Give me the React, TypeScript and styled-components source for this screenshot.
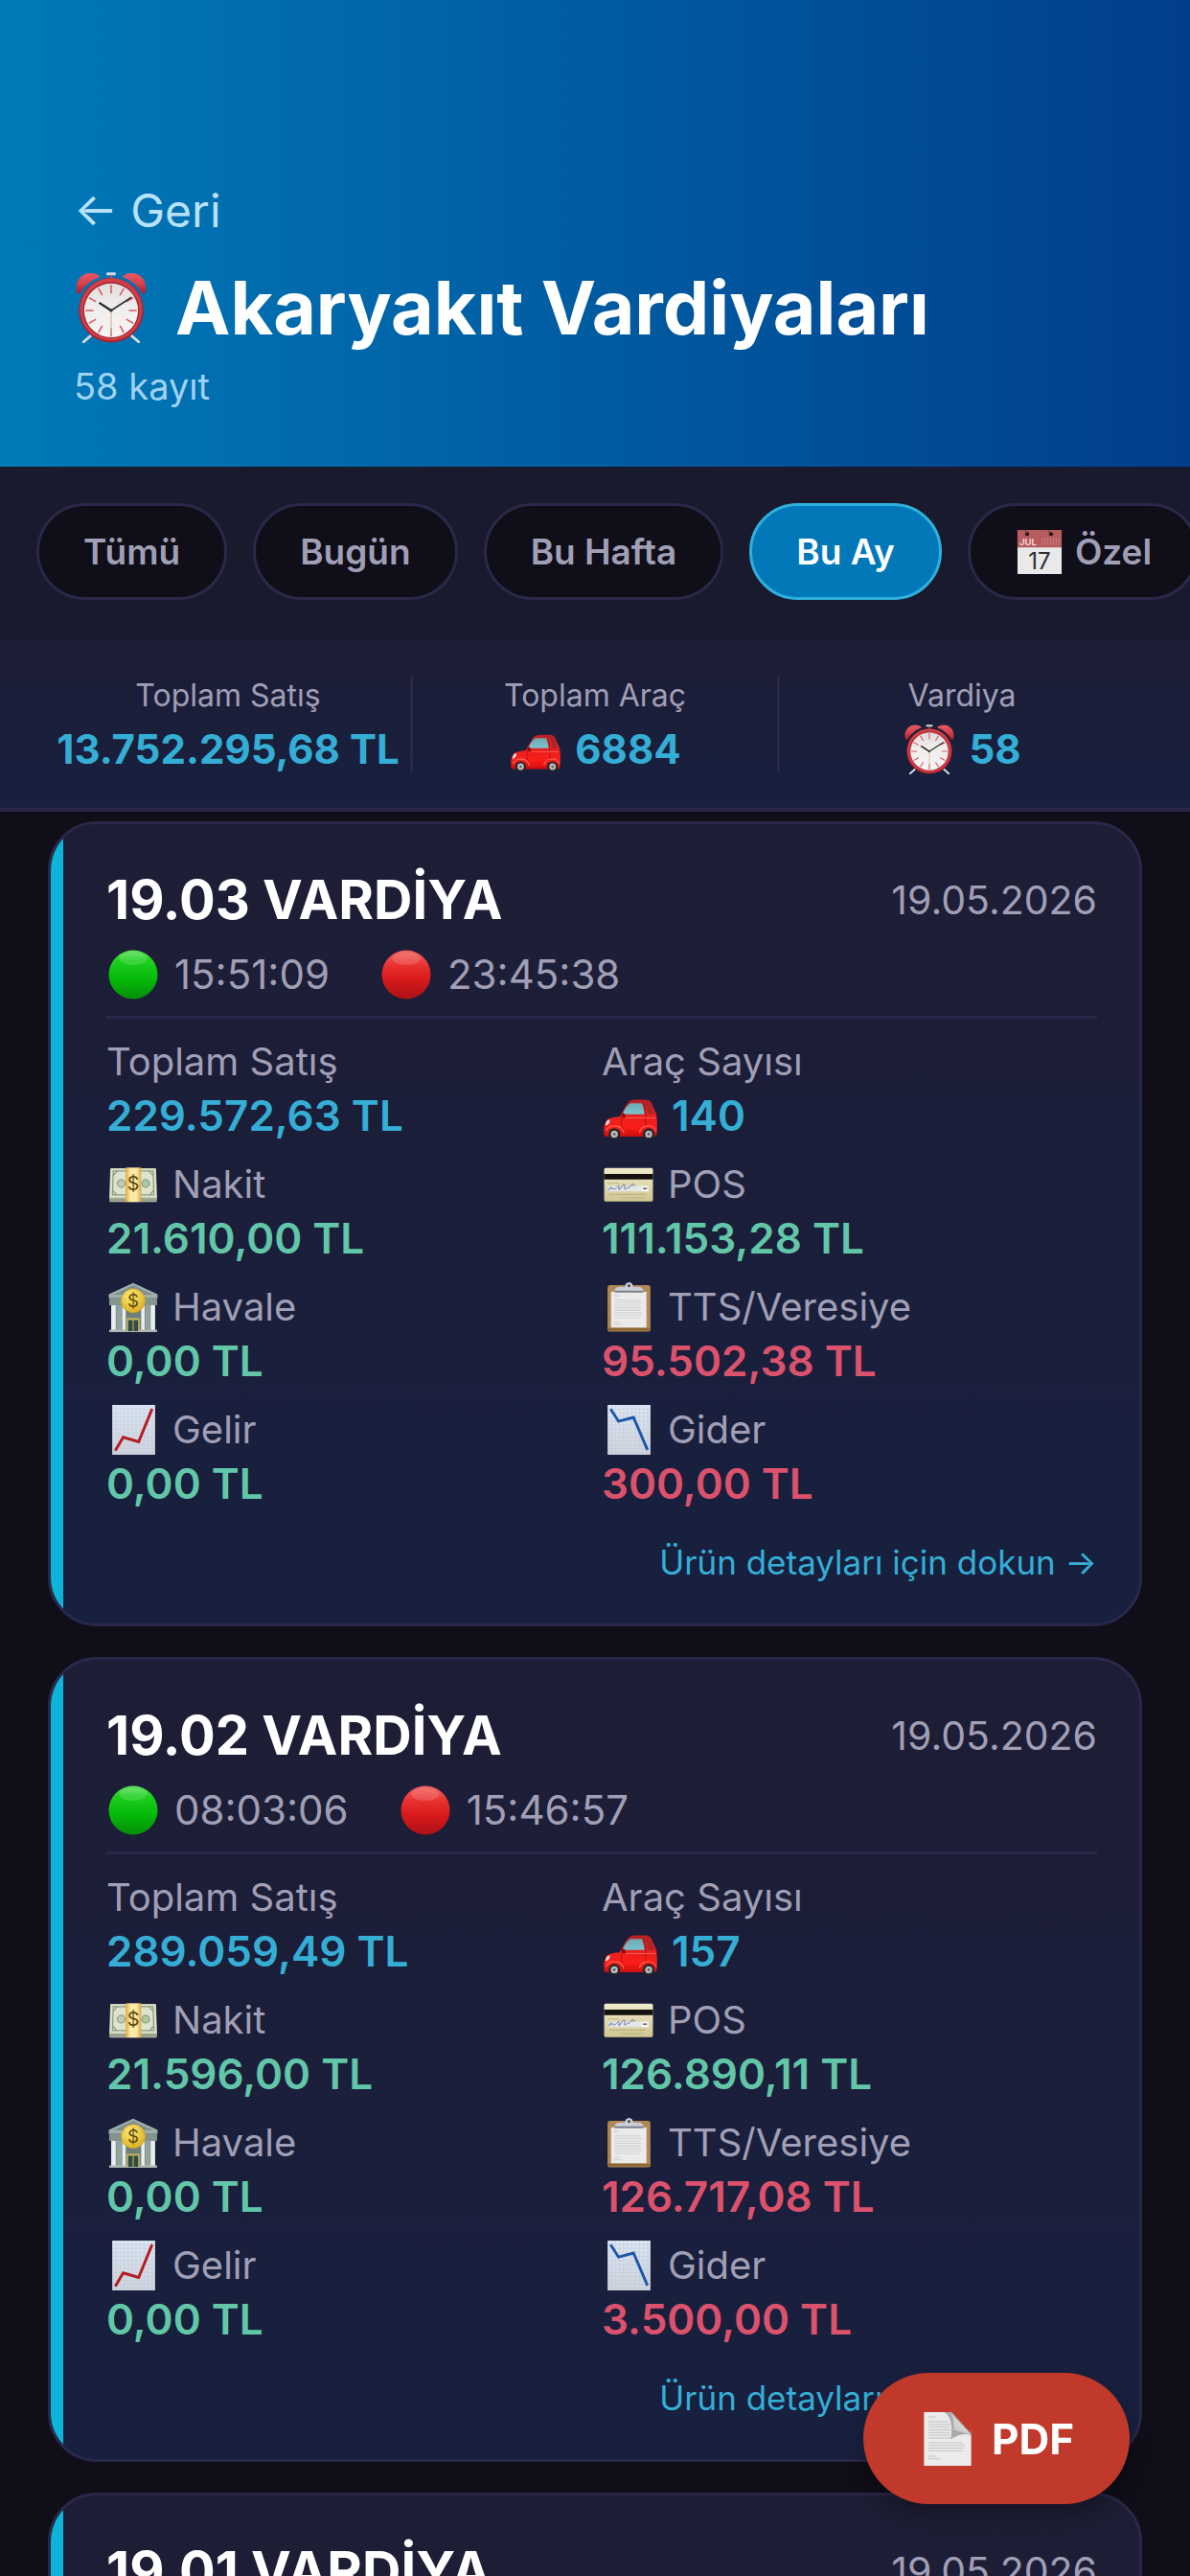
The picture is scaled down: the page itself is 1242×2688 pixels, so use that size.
import { useState } from 'react';
import type { ReactNode } from 'react';
import { createGlobalStyle, styled } from 'styled-components';

type Tone = 'blue' | 'green' | 'red';

interface Shift {
  id: string;
  name: string;
  date: string;
  start: string;
  end: string;
  total: string;
  vehicles: number;
  cash: string;
  pos: string;
  transfer: string;
  credit: string;
  income: string;
  expense: string;
}

const colors = {
  page: '#0f0e19',
  bar: '#1a1a2e',
  border: '#2a2848',
  muted: '#a09fb5',
  accent: '#0cb4da',
  blue: '#35aed6',
  green: '#62c6a8',
  red: '#dc526c',
};

const FILTERS = ['Tümü', 'Bugün', 'Bu Hafta', 'Bu Ay', 'Özel'];

const SHIFTS: Shift[] = [
  {
    id: '1903',
    name: '19.03 VARDİYA',
    date: '19.05.2026',
    start: '15:51:09',
    end: '23:45:38',
    total: '229.572,63 TL',
    vehicles: 140,
    cash: '21.610,00 TL',
    pos: '111.153,28 TL',
    transfer: '0,00 TL',
    credit: '95.502,38 TL',
    income: '0,00 TL',
    expense: '300,00 TL',
  },
  {
    id: '1902',
    name: '19.02 VARDİYA',
    date: '19.05.2026',
    start: '08:03:06',
    end: '15:46:57',
    total: '289.059,49 TL',
    vehicles: 157,
    cash: '21.596,00 TL',
    pos: '126.890,11 TL',
    transfer: '0,00 TL',
    credit: '126.717,08 TL',
    income: '0,00 TL',
    expense: '3.500,00 TL',
  },
  {
    id: '1901',
    name: '19.01 VARDİYA',
    date: '19.05.2026',
    start: '00:02:14',
    end: '07:58:40',
    total: '198.340,20 TL',
    vehicles: 118,
    cash: '18.450,00 TL',
    pos: '97.215,60 TL',
    transfer: '0,00 TL',
    credit: '82.674,60 TL',
    income: '0,00 TL',
    expense: '0,00 TL',
  },
];

// Gradients shared by all the icons
const IconDefs = () => (
  <SDefs aria-hidden="true">
    <defs>
      <linearGradient id="gGreen" x1="0" y1="0" x2="0" y2="1">
        <stop offset="0" stopColor="#5fe05c" />
        <stop offset="0.2" stopColor="#1fd01f" />
        <stop offset="0.6" stopColor="#04b908" />
        <stop offset="1" stopColor="#068d0a" />
      </linearGradient>
      <linearGradient id="gRed" x1="0" y1="0" x2="0" y2="1">
        <stop offset="0" stopColor="#f0625e" />
        <stop offset="0.3" stopColor="#ea3230" />
        <stop offset="0.6" stopColor="#d8191b" />
        <stop offset="1" stopColor="#ab1216" />
      </linearGradient>
      <linearGradient id="gBell" x1="0" y1="0" x2="0" y2="1">
        <stop offset="0" stopColor="#e85a64" />
        <stop offset="0.5" stopColor="#d9404c" />
        <stop offset="1" stopColor="#a81f2b" />
      </linearGradient>
      <linearGradient id="gFace" x1="0" y1="0" x2="0" y2="1">
        <stop offset="0" stopColor="#e0dcdc" />
        <stop offset="0.4" stopColor="#efedec" />
        <stop offset="1" stopColor="#f7f5f4" />
      </linearGradient>
      <linearGradient id="gCar" x1="0" y1="0" x2="0" y2="1">
        <stop offset="0" stopColor="#b52226" />
        <stop offset="0.45" stopColor="#e8201f" />
        <stop offset="0.75" stopColor="#fb1d18" />
        <stop offset="1" stopColor="#c90c0e" />
      </linearGradient>
      <linearGradient id="gGlass" x1="0" y1="0" x2="0" y2="1">
        <stop offset="0" stopColor="#6ba9b2" />
        <stop offset="1" stopColor="#7cc3cf" />
      </linearGradient>
      <linearGradient id="gPaper" x1="0" y1="0" x2="0" y2="1">
        <stop offset="0" stopColor="#dce6f2" />
        <stop offset="1" stopColor="#cfd3dc" />
      </linearGradient>
      <linearGradient id="gCard" x1="0" y1="0" x2="0" y2="1">
        <stop offset="0" stopColor="#f0ebca" />
        <stop offset="1" stopColor="#cfc592" />
      </linearGradient>
      <linearGradient id="gBand" x1="0" y1="0" x2="1" y2="0">
        <stop offset="0" stopColor="#dba93b" />
        <stop offset="0.3" stopColor="#fbe9a5" />
        <stop offset="0.7" stopColor="#fbe9a5" />
        <stop offset="1" stopColor="#dba93b" />
      </linearGradient>
      <radialGradient id="gCoin" cx="0.4" cy="0.3" r="0.8">
        <stop offset="0" stopColor="#fdea72" />
        <stop offset="1" stopColor="#d9a91c" />
      </radialGradient>
      <linearGradient id="gFold" x1="1" y1="0" x2="0" y2="1">
        <stop offset="0" stopColor="#ffffff" />
        <stop offset="0.4" stopColor="#d9d9d9" />
        <stop offset="1" stopColor="#6f6f6f" />
      </linearGradient>
    </defs>
  </SDefs>
);

const ClockIcon = () => (
  <svg viewBox="0 0 50 50">
    <g stroke="#d3dde6" strokeWidth="1.900" strokeLinecap="round">
      <path d="M10.400 45 5.600 49.200M39.600 45l4.800 4.200" />
      <path d="M22.500 1.200h5" />
    </g>
    <path d="M25 2v4.500" stroke="#c8505a" strokeWidth="1.300" />
    <path d="M1 14.500C-1 8 3 .6 10.500.6c3 0 5.500 1 6.800 2.600C11 5.500 6 9.500 3 15.200c-.8.400-1.700.100-2-.700z" fill="url(#gBell)" />
    <path d="M49 14.500C51 8 47 .6 39.500.6c-3 0-5.500 1-6.800 2.600C39 5.500 44 9.500 47 15.200c.8.400 1.700.100 2-.700z" fill="url(#gBell)" />
    <circle cx="25" cy="26.800" r="22.800" fill="#a91f2b" />
    <circle cx="25" cy="26.300" r="22" fill="#cf3f49" />
    <circle cx="25" cy="26.800" r="19.800" fill="#a3222d" />
    <circle cx="25" cy="27" r="19" fill="url(#gFace)" />
    <g stroke="#d5545d" strokeWidth="1">
      <path d="M25 9v6M25 39.500v6M7 27h5.500M37.500 27H43" />
      <path d="m16 11.400 2.800 4.900M34 11.400l-2.800 4.900M16 42.600l2.800-4.900M34 42.600l-2.800-4.900" />
      <path d="m9.400 18 4.900 2.800M40.600 18l-4.900 2.800M9.400 36l4.900-2.800M40.600 36l-4.900-2.800" />
    </g>
    <path d="M25 27v18" stroke="#cdb293" strokeWidth="0.700" />
    <path d="m16.500 21.500 8.500 5.500" stroke="#222" strokeWidth="1.500" />
    <path d="m25 27 14.300-9.300" stroke="#333" strokeWidth="1.200" />
    <circle cx="25" cy="27" r="1.100" fill="#333" />
  </svg>
);

const CarIcon = () => (
  <svg viewBox="0 -4 50 50">
    <path
      d="M.5 39c-.6-5-.2-10.500 2.600-14 2.500-1.800 7-2.600 11.700-2.900l7-11.800C23.600 7.400 26 6.300 30 6.300h8c4 0 5.600 1 6.800 3.700L49 19.500c.9 2.500 1 14.500.6 18.500-.3 1.700-1.500 2.700-3 2.700H3C1.500 40.700.700 40.200.5 39z"
      fill="url(#gCar)"
    />
    <path d="M17.800 19.800c1.300-4.200 3.800-8 6-9.400.8-.6 1.500-.7 2.500-.7h9.500c1 2.500 2 6.500 2.300 10.100z" fill="url(#gGlass)" />
    <path d="M39.500 9c2 0 3.500.5 4.300 2.500l3 8.300h-5c-.3-4-1-7.800-2.300-10.800z" fill="#a92529" />
    <path d="M36.500 9c2.500 5 3 12 2.700 22" stroke="#a01316" strokeWidth="0.800" fill="none" />
    <path d="M17 22.500c-1 4-1 8 1.500 13" stroke="#b80e10" strokeWidth="0.800" fill="none" />
    <path d="M20 23.300h28.500" stroke="#fb5a50" strokeWidth="0.900" />
    <path d="M1.800 30.500c0-3 1-5 3.700-5.600.7 2-.3 4.800-3.700 5.600z" fill="#f3dcdc" />
    <path d="M17.300 18.700c2 0 3.400 1 3.400 4.300h-3c-1.400-1-1.400-3-.4-4.300z" fill="#8e0d10" />
    <path d="M2.500 35.500c1-6 14-7.500 16.500 2M33.500 37c1-8 13.500-8.500 15.500-1.500" fill="none" stroke="#ff6257" strokeWidth="1.100" />
    <circle cx="10" cy="38.300" r="5.400" fill="#26262a" />
    <circle cx="42" cy="38.300" r="5.400" fill="#26262a" />
    <circle cx="10" cy="38.300" r="3.300" fill="#b9b9be" />
    <circle cx="42" cy="38.300" r="3.300" fill="#b9b9be" />
    <circle cx="10" cy="38.300" r="1.200" fill="#5d5d62" />
    <circle cx="42" cy="38.300" r="1.200" fill="#5d5d62" />
  </svg>
);

const DotIcon = ({ fill }: { fill: string }) => (
  <svg viewBox="0 0 50 50">
    <circle cx="25" cy="25" r="24.500" fill={`url(#${fill})`} />
    <ellipse cx="25" cy="9" rx="14" ry="6.500" fill="#fff" opacity="0.140" />
  </svg>
);

const CalendarIcon = () => (
  <svg viewBox="0 0 50 50">
    <path d="M1 1h48v48H1z" fill="#e9e9ea" />
    <path d="M1 1h48v19H1z" fill="#b75b5e" />
    <circle cx="11.500" cy="5.500" r="2.200" fill="#1c1718" />
    <circle cx="37.500" cy="5.500" r="2.200" fill="#1c1718" />
    <path d="M11.500 5.500 9.500 1M37.500 5.500 34 1" stroke="#4d2f31" strokeWidth="1" />
    <path d="M28 9.500v8M31 9.500v8M34 9.500v8M37 9.500v8M40 9.500v8M43 9.500v8M46 9.500v8" stroke="#cd8c8d" strokeWidth="0.800" />
    <text x="3" y="18" fontSize="10" fill="#f3dede">
      JUL
    </text>
    <text x="25" y="44" fontSize="25" fontWeight="400" textAnchor="middle" fill="#2f2f31">
      17
    </text>
  </svg>
);

const MoneyIcon = () => (
  <svg viewBox="0 0 50 50">
    <path d="M2 9h46l1 30-.5 3.500h-47L1 39z" fill="#b9bda9" />
    <path d="M1.500 39.500h47M1.500 41h47" stroke="#7c806e" strokeWidth="0.700" />
    <path d="M2.500 9h45l1 29h-47z" fill="#dfe2cc" />
    <path d="M5 11.500h40l.8 24H4.200z" fill="none" stroke="#8c9a83" strokeWidth="1.200" />
    <path d="m5 16 4-4.500M45 16l-4-4.500M4.500 31l4 4.500M45.500 31l-4 4.500" stroke="#8c9a83" strokeWidth="1.200" />
    <circle cx="13" cy="24" r="3.800" fill="#c3cdb4" stroke="#7f917a" strokeWidth="1" />
    <circle cx="37.500" cy="24" r="3.800" fill="#a9c9a0" stroke="#7f917a" strokeWidth="1" />
    <path d="M17.500 8h15.500v34.500H17.500z" fill="url(#gBand)" />
    <text x="25.200" y="31" fontSize="19" textAnchor="middle" fill="#5f4a12">
      $
    </text>
  </svg>
);

const CreditCardIcon = () => (
  <svg viewBox="0 0 50 50">
    <rect x="0.500" y="8.500" width="49" height="33.500" rx="1.500" fill="url(#gCard)" />
    <path d="M.5 14.500h49V20H.5z" fill="#14120e" />
    <path d="M4 26.500h41v5.500H4z" fill="#e6e6e6" />
    <path d="M38 26.500h7v5.500h-7z" fill="#f8f7f2" />
    <path d="M39.500 29h4" stroke="#4c4c4c" strokeWidth="1.300" />
    <path
      d="M5 31c2-5 3-4 2.500-1 1.500-2 2.500-2 3 0 2 0 4-5 5-3.500.5 1.500-1 3.500 0 4 2-1 3-6 5.500-5.500.500 1-.5 4.500.5 5 2-1 2-2.500 4-2 1 .500 2-4 4-3.500.500 1-.500 3 2 1"
      fill="none"
      stroke="#5b6fa8"
      strokeWidth="0.900"
    />
    <path d="M4 23.800h12M6 35h36M17 38.500h24" stroke="#b0a671" strokeWidth="1.100" strokeDasharray="2 1" />
  </svg>
);

const BankIcon = () => (
  <svg viewBox="0 0 50 50">
    <path d="M25 .8 49.500 12v4H.5v-4z" fill="#9fb0ac" />
    <path d="M25 3 45 12.500H5z" fill="#7d908d" />
    <path d="M1 16h48v7H1z" fill="#84958f" />
    <path d="M3 23h44v26H3z" fill="#6d7f7b" />
    <path d="M3 23h4.500v25H3zM14 23h3.500v25H14zM33 23h3.500v25H33zM42.500 23H47v25h-4.500z" fill="#e9eeee" />
    <path d="M8 23h5.500v25H8zM37 23h5v25h-5z" fill="#93a39f" />
    <path d="M1 47.500h48V50H1z" fill="#aeb8b4" />
    <path d="M18.500 36h13v13h-13z" fill="#cdb459" />
    <path d="M20 38h4.500v11H20zM25.500 38H30v11h-4.500z" fill="#2e4b46" />
    <circle cx="25" cy="18.500" r="12" fill="url(#gCoin)" stroke="#caa02a" strokeWidth="0.800" />
    <text x="25" y="25" fontSize="18" textAnchor="middle" fill="#5e4a10">
      $
    </text>
  </svg>
);

const ClipboardIcon = () => (
  <svg viewBox="0 0 50 50">
    <rect x="4" y="3" width="43" height="46.500" rx="2.500" fill="#b08a54" />
    <path d="M4.500 46h42v2.500h-42z" fill="#8b6535" />
    <path d="M7.500 9.500h35.500V45.500H7.500z" fill="#ebebeb" />
    <path d="M10.500 13.500h5" stroke="#c6c6c6" strokeWidth="1" />
    <path
      d="M11 18h26M11 20.500h27M11 23h26M11 25.500h27M11 28h26M11 30.500h27M11 33h27M11 35.500h25M10.500 40h5M10.500 42h8"
      stroke="#cfcfcf"
      strokeWidth="1"
    />
    <path d="M11 9.500c0-4 2.500-5 6-5h4.500a4 4 0 0 1 8 0H34c3.500 0 6 1 6 5z" fill="#c8ccd6" />
    <path d="M11 8.500h29v1.800H11z" fill="#7a7d86" />
    <circle cx="25.500" cy="3.800" r="3.600" fill="#ccd1db" />
    <circle cx="25.500" cy="3.600" r="1.400" fill="#3a3c4d" />
  </svg>
);

const ChartIcon = ({ down }: { down?: boolean }) => (
  <svg viewBox="0 0 50 50">
    <path d="M4 0h43v50H4z" fill="url(#gPaper)" />
    <path
      d="M8 0v50M12 0v50M16 0v50M20 0v50M24 0v50M28 0v50M32 0v50M36 0v50M40 0v50M44 0v50M4 4h43M4 8h43M4 12h43M4 16h43M4 20h43M4 24h43M4 28h43M4 32h43M4 36h43M4 40h43M4 44h43M4 48h43"
      stroke="#bfcbdc"
      strokeWidth="0.500"
    />
    {down ? (
      <path d="m7 4 8 12.500 15-4L44 45" fill="none" stroke="#1c56a8" strokeWidth="2.800" />
    ) : (
      <path d="m7 46 8-13.500 15.500 4.500L44 4" fill="none" stroke="#b31d22" strokeWidth="2.800" />
    )}
  </svg>
);

const PageIcon = () => (
  <svg viewBox="0 0 50 50">
    <path d="M3 0h26l18 16.500V50H3z" fill="#ebebeb" />
    <path
      d="M7 4.500h7M7 9h19M7 11.500h21M7 14h20M7 16.500h21M7 19h20M7 21.500h20M7 24h22M7 28.500h32M7 31h34M7 33.500h33M7 36h32M7 41h7M7 43.500h11"
      stroke="#c2c2c2"
      strokeWidth="0.900"
    />
    <path d="M22 0c6 4 8 12 6 25 8-4 14-6 19-3v-4L31 0z" fill="#747474" opacity="0.550" />
    <path d="M27 0c4 4 4 9 3.500 16.500C38 15.500 43 17 47 21.500z" fill="url(#gFold)" />
    <path d="M29 0 47 20V0z" fill="#c0392b" />
    <path d="M27 0c4 4 4 9 3.500 16.500L47 21z" fill="#e4e4e4" opacity="0.600" />
  </svg>
);

interface FieldProps {
  icon?: ReactNode;
  label: string;
  value: ReactNode;
  valueIcon?: ReactNode;
  tone: Tone;
}

const Field = ({ icon, label, value, valueIcon, tone }: FieldProps) => (
  <SField>
    <SLabel>
      {icon && <SIcon $size={52}>{icon}</SIcon>}
      {label}
    </SLabel>
    <SValue $tone={tone}>
      {valueIcon && <SIcon $size={56}>{valueIcon}</SIcon>}
      {value}
    </SValue>
  </SField>
);

const ShiftCard = ({ shift }: { shift: Shift }) => (
  <SCard>
    <SCardHead>
      <SCardTitle>{shift.name}</SCardTitle>
      <SDate>{shift.date}</SDate>
    </SCardHead>
    <STimes>
      <STime>
        <SIcon $size={52}>
          <DotIcon fill="gGreen" />
        </SIcon>
        {shift.start}
      </STime>
      <STime>
        <SIcon $size={52}>
          <DotIcon fill="gRed" />
        </SIcon>
        {shift.end}
      </STime>
    </STimes>
    <SFields>
      <Field label="Toplam Satış" value={shift.total} tone="blue" />
      <Field label="Araç Sayısı" value={shift.vehicles} valueIcon={<CarIcon />} tone="blue" />
      <Field icon={<MoneyIcon />} label="Nakit" value={shift.cash} tone="green" />
      <Field icon={<CreditCardIcon />} label="POS" value={shift.pos} tone="green" />
      <Field icon={<BankIcon />} label="Havale" value={shift.transfer} tone="green" />
      <Field icon={<ClipboardIcon />} label="TTS/Veresiye" value={shift.credit} tone="red" />
      <Field icon={<ChartIcon />} label="Gelir" value={shift.income} tone="green" />
      <Field icon={<ChartIcon down />} label="Gider" value={shift.expense} tone="red" />
    </SFields>
    <SDetailLink href={`#${shift.id}`}>Ürün detayları için dokun →</SDetailLink>
  </SCard>
);

const App = () => {
  const [filter, setFilter] = useState('Bu Ay');

  return (
    <SLayout>
      <GlobalStyle />
      <IconDefs />
      <SHeader>
        <SBack type="button">← Geri</SBack>
        <STitle>
          <SIcon $size={74}>
            <ClockIcon />
          </SIcon>
          Akaryakıt Vardiyaları
        </STitle>
        <SCount>58 kayıt</SCount>
      </SHeader>
      <SFilters>
        {FILTERS.map(name => (
          <SFilter key={name} type="button" $active={name === filter} onClick={() => setFilter(name)}>
            {name === 'Özel' && (
              <SIcon $size={48}>
                <CalendarIcon />
              </SIcon>
            )}
            {name}
          </SFilter>
        ))}
      </SFilters>
      <SStats>
        <SStat>
          <SStatLabel>Toplam Satış</SStatLabel>
          <SStatValue>13.752.295,68 TL</SStatValue>
        </SStat>
        <SStat>
          <SStatLabel>Toplam Araç</SStatLabel>
          <SStatValue>
            <SIcon $size={52}>
              <CarIcon />
            </SIcon>
            6884
          </SStatValue>
        </SStat>
        <SStat>
          <SStatLabel>Vardiya</SStatLabel>
          <SStatValue>
            <SIcon $size={52}>
              <ClockIcon />
            </SIcon>
            58
          </SStatValue>
        </SStat>
      </SStats>
      <SList>
        {SHIFTS.map(shift => (
          <ShiftCard key={shift.id} shift={shift} />
        ))}
      </SList>
      <SPdfButton type="button">
        <SIcon $size={56}>
          <PageIcon />
        </SIcon>
        PDF
      </SPdfButton>
    </SLayout>
  );
};

const GlobalStyle = createGlobalStyle`
  * {
    box-sizing: border-box;
  }
  body {
    margin: 0;
    background: ${colors.page};
    font-family: Inter, 'Liberation Sans', sans-serif;
  }
  h1, h2, p, dl, dt, dd {
    margin: 0;
  }
  button {
    font-family: inherit;
    cursor: pointer;
  }
`;

const SDefs = styled.svg`
  position: absolute;
  width: 0;
  height: 0;
`;

const SLayout = styled.div`
  display: flex;
  flex-direction: column;
  height: 100vh;
  overflow: hidden;
`;

// Square drawing with 2px of air on both sides
const SIcon = styled.span<{ $size: number }>`
  display: flex;
  flex-shrink: 0;
  padding: 0 2px;

  svg {
    width: ${props => props.$size}px;
    height: ${props => props.$size}px;
  }
`;

const SHeader = styled.header`
  display: flex;
  flex-direction: column;
  align-items: flex-start;
  flex-shrink: 0;
  padding: 190px 77px 61px;
  background: linear-gradient(90deg, #0079b8, #013e8b);
`;

const SBack = styled.button`
  padding: 0;
  border: 0;
  background: none;
  color: #b8e2fb;
  font-size: 48px;
  line-height: 60px;
`;

const STitle = styled.h1`
  display: flex;
  align-items: center;
  gap: 28px;
  margin: 27px 0 15px;
  color: #fff;
  font-size: 77px;
  font-weight: 700;
  line-height: 88px;
  white-space: nowrap;
`;

const SCount = styled.p`
  color: #9fd2f3;
  font-size: 38px;
  line-height: 46px;
`;

const SFilters = styled.nav`
  display: flex;
  flex-shrink: 0;
  gap: 27px;
  padding: 38px 38px 41px;
  background: ${colors.bar};
  overflow: hidden;
`;

const SFilter = styled.button<{ $active: boolean }>`
  display: flex;
  align-items: center;
  flex-shrink: 0;
  gap: 11px;
  height: 101px;
  padding: 0 46px;
  border: 3px solid ${props => (props.$active ? '#2fb0dc' : colors.border)};
  border-radius: 51px;
  background: ${props => (props.$active ? '#0278b8' : colors.page)};
  color: ${props => (props.$active ? '#fff' : colors.muted)};
  font-size: 37px;
  font-weight: 600;
`;

const SStats = styled.section`
  display: flex;
  flex-shrink: 0;
  padding: 39px 48px 37px;
  border-bottom: 4px solid ${colors.border};
  background: linear-gradient(#1d1d35, #17203f);
`;

const SStat = styled.div`
  display: flex;
  flex: 1 1 0;
  flex-direction: column;
  align-items: center;
  gap: 12px;
  min-width: 0;
  border-right: 3px solid ${colors.border};

  &:last-child {
    border-right: 0;
  }
`;

const SStatLabel = styled.span`
  color: ${colors.muted};
  font-size: 32px;
  line-height: 40px;
`;

const SStatValue = styled.strong`
  display: flex;
  align-items: center;
  gap: 13px;
  height: 48px;
  color: ${colors.blue};
  font-size: 42px;
  font-weight: 700;
  line-height: 48px;
  white-space: nowrap;
`;

const SList = styled.main`
  display: flex;
  flex: 1;
  flex-direction: column;
  gap: 32px;
  min-height: 0;
  padding: 10px 50px;
  overflow-y: auto;
  scrollbar-width: none;
`;

const SCard = styled.article`
  position: relative;
  display: flex;
  flex-direction: column;
  flex-shrink: 0;
  padding: 45px 44px 42px 58px;
  border: 3px solid ${colors.border};
  border-radius: 51px;
  background: linear-gradient(#1e1d35, #17203f);
  overflow: hidden;

  &::before {
    content: '';
    position: absolute;
    top: 0;
    bottom: 0;
    left: 0;
    width: 13px;
    background: ${colors.accent};
  }
`;

const SCardHead = styled.div`
  display: flex;
  justify-content: space-between;
  align-items: center;
`;

const SCardTitle = styled.h2`
  color: #fff;
  font-size: 56px;
  font-weight: 700;
  line-height: 68px;
`;

const SDate = styled.span`
  color: ${colors.muted};
  font-size: 41px;
`;

const STimes = styled.div`
  display: flex;
  gap: 52px;
  margin-top: 18px;
  padding-bottom: 17px;
  border-bottom: 3px solid ${colors.border};
`;

const STime = styled.span`
  display: flex;
  align-items: center;
  gap: 15px;
  color: ${colors.muted};
  font-size: 42px;
  line-height: 52px;
`;

const SFields = styled.dl`
  display: grid;
  grid-template-columns: 1fr 1fr;
  row-gap: 16px;
  padding-top: 18px;
`;

const SField = styled.div`
  min-width: 0;
`;

const SLabel = styled.dt`
  display: flex;
  align-items: center;
  gap: 13px;
  color: ${colors.muted};
  font-size: 40px;
  line-height: 54px;
`;

const SValue = styled.dd<{ $tone: Tone }>`
  display: flex;
  align-items: center;
  gap: 13px;
  height: 58px;
  color: ${props => colors[props.$tone]};
  font-size: 44px;
  font-weight: 600;
  line-height: 58px;
`;

const SDetailLink = styled.a`
  align-self: flex-end;
  margin-top: 31px;
  color: ${colors.blue};
  font-size: 35px;
  line-height: 44px;
  text-decoration: none;
`;

const SPdfButton = styled.button`
  position: fixed;
  right: 63px;
  bottom: 75px;
  display: flex;
  align-items: center;
  gap: 16px;
  height: 137px;
  padding: 0 58px;
  border: 0;
  border-radius: 69px;
  background: #c0392b;
  box-shadow: 0 12px 24px rgba(0, 0, 0, 0.3);
  color: #fff;
  font-size: 44px;
  font-weight: 700;
`;

export default App;
